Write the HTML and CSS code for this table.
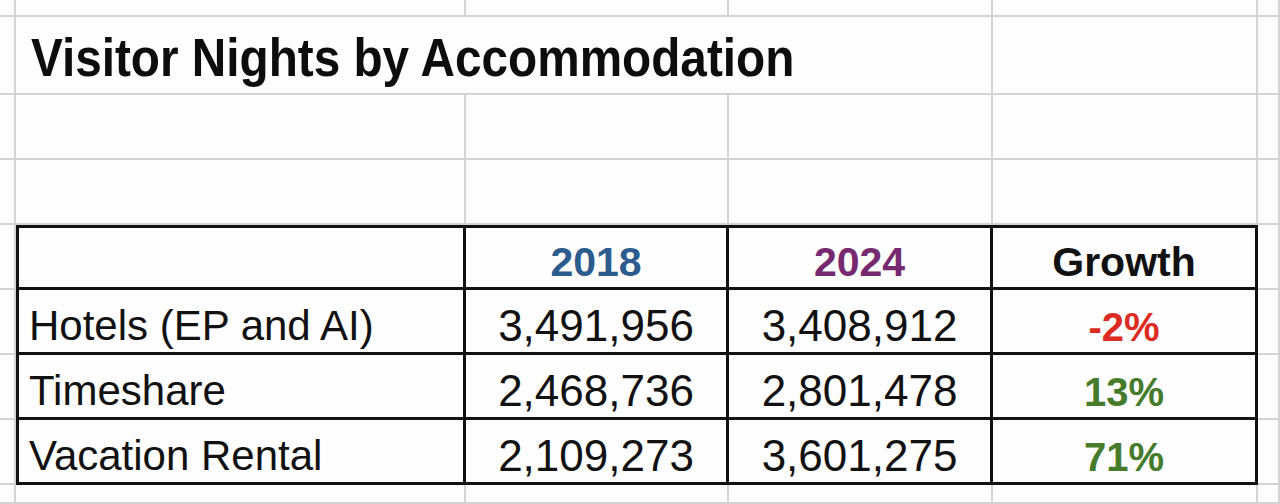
FILE: index.html
```html
<!DOCTYPE html>
<html lang="en">
<head>
<meta charset="utf-8">
<title>Visitor Nights by Accommodation</title>
<link rel="stylesheet" href="styles.css">
</head>
<body>
<div class="sheet">
  <!-- row 0 -->
  <div class="cell"></div>
  <div class="cell"></div>
  <div class="cell"></div>
  <div class="cell"></div>
  <div class="cell"></div>
  <div class="cell"></div>
  <!-- row 1: title -->
  <div class="cell"></div>
  <div class="cell title"><span class="title-text">Visitor Nights by Accommodation</span></div>
  <div class="cell"></div>
  <div class="cell"></div>
  <!-- row 2 -->
  <div class="cell"></div>
  <div class="cell"></div>
  <div class="cell"></div>
  <div class="cell"></div>
  <div class="cell"></div>
  <div class="cell"></div>
  <!-- row 3 -->
  <div class="cell"></div>
  <div class="cell"></div>
  <div class="cell"></div>
  <div class="cell"></div>
  <div class="cell"></div>
  <div class="cell"></div>
  <!-- row 4: table header -->
  <div class="cell"></div>
  <div class="cell t top first"></div>
  <div class="cell t top head y2018">2018</div>
  <div class="cell t top head y2024">2024</div>
  <div class="cell t top head">Growth</div>
  <div class="cell"></div>
  <!-- row 5 -->
  <div class="cell"></div>
  <div class="cell t first label">Hotels (EP and AI)</div>
  <div class="cell t num">3,491,956</div>
  <div class="cell t num">3,408,912</div>
  <div class="cell t pct neg">-2%</div>
  <div class="cell"></div>
  <!-- row 6 -->
  <div class="cell"></div>
  <div class="cell t first label">Timeshare</div>
  <div class="cell t num">2,468,736</div>
  <div class="cell t num">2,801,478</div>
  <div class="cell t pct pos">13%</div>
  <div class="cell"></div>
  <!-- row 7 -->
  <div class="cell"></div>
  <div class="cell t first label">Vacation Rental</div>
  <div class="cell t num">2,109,273</div>
  <div class="cell t num">3,601,275</div>
  <div class="cell t pct pos">71%</div>
  <div class="cell"></div>
  <!-- row 8 -->
  <div class="cell"></div>
  <div class="cell"></div>
  <div class="cell"></div>
  <div class="cell"></div>
  <div class="cell"></div>
  <div class="cell"></div>
</div>
</body>
</html>
```

FILE: styles.css
```css
html, body {
  margin: 0;
  padding: 0;
  background: #fdfdfd;
}

body {
  width: 1280px;
  height: 504px;
  overflow: hidden;
  font-family: "Liberation Sans", Arial, sans-serif;
  color: #111;
}

.sheet {
  display: grid;
  grid-template-columns: 16px 450px 263px 264px 265px 22px;
  grid-template-rows: 17px 78px 65px 65px 65px 65px 65px 65px 19px;
}

.cell {
  box-sizing: border-box;
  border-right: 2px solid #d3d3d3;
  border-bottom: 2px solid #d3d3d3;
  display: flex;
  align-items: flex-end;
  justify-content: center;
  line-height: 1;
  white-space: nowrap;
  min-width: 0;
}

.title {
  grid-column: 2 / span 3;
  justify-content: flex-start;
  padding: 0 0 9px 15px;
  font-family: "Liberation Sans", Arial, sans-serif;
  font-weight: 700;
  font-size: 53px;
  color: #0d0d0d;
}

.title-text {
  display: inline-block;
  transform: scaleX(0.9);
  transform-origin: left bottom;
}

.t {
  border-right: 3px solid #111;
  border-bottom: 3px solid #111;
}

.top {
  border-top: 3px solid #111;
}

.first {
  border-left: 3px solid #111;
}

.head {
  font-weight: 700;
  font-size: 41px;
  padding-bottom: 4px;
  color: #111;
}

.y2018 { color: #2c5c8e; }
.y2024 { color: #77296f; }

.label {
  justify-content: flex-start;
  font-size: 42px;
  padding: 0 0 5px 10px;
}

.num {
  font-size: 44px;
  padding-bottom: 4px;
}

.pct {
  font-weight: 700;
  font-size: 40px;
  padding-bottom: 5px;
}

.neg { color: #dc2b23; }
.pos { color: #457b2b; }
```
